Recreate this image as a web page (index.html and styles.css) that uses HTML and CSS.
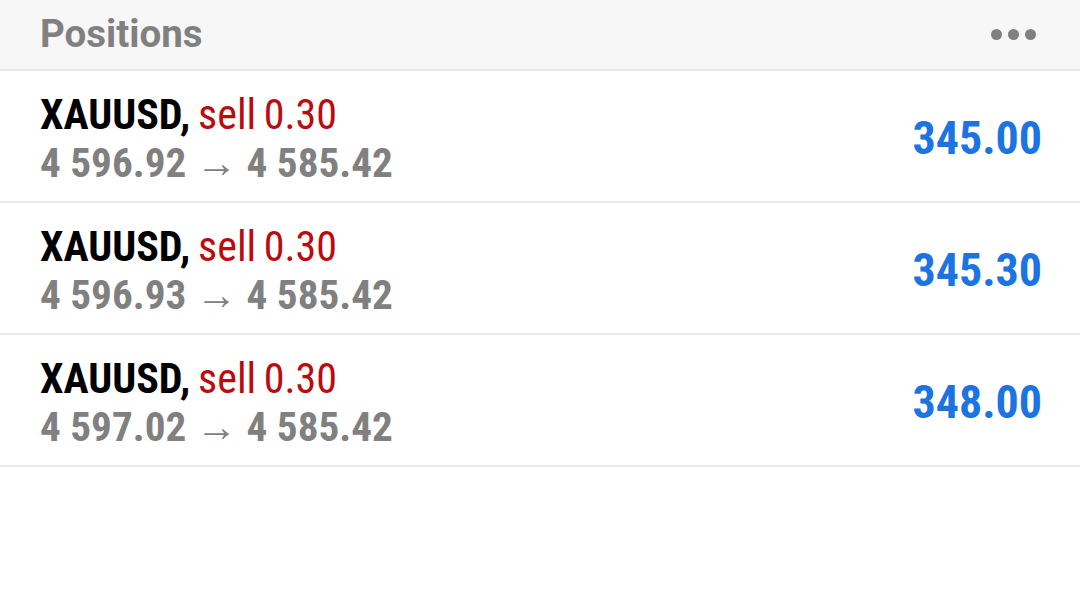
FILE: index.html
```html
<!DOCTYPE html>
<html>
<head>
<meta charset="utf-8">
<link rel="stylesheet" href="styles.css">
</head>
<body>
<div class="app">
  <header class="header">
    <h1 class="title">Positions</h1>
    <button class="more" aria-label="More">
      <span class="dot"></span><span class="dot"></span><span class="dot"></span>
    </button>
  </header>
  <ul class="list">
    <li class="row">
      <div class="info">
        <div class="line1"><span class="symbol">XAUUSD,</span> <span class="side">sell 0.30</span></div>
        <div class="line2">4 596.92 → 4 585.42</div>
      </div>
      <div class="profit">345.00</div>
    </li>
    <li class="row">
      <div class="info">
        <div class="line1"><span class="symbol">XAUUSD,</span> <span class="side">sell 0.30</span></div>
        <div class="line2">4 596.93 → 4 585.42</div>
      </div>
      <div class="profit">345.30</div>
    </li>
    <li class="row">
      <div class="info">
        <div class="line1"><span class="symbol">XAUUSD,</span> <span class="side">sell 0.30</span></div>
        <div class="line2">4 597.02 → 4 585.42</div>
      </div>
      <div class="profit">348.00</div>
    </li>
  </ul>
</div>
</body>
</html>
```
FILE: styles.css
```css
html, body {
  margin: 0;
  padding: 0;
  background: #ffffff;
}
.app {
  width: 1080px;
  height: 608px;
  background: #ffffff;
  font-family: "Roboto Condensed", Roboto, "Liberation Sans", sans-serif;
}
.header {
  height: 69px;
  background: #f7f7f7;
  border-bottom: 2px solid #e6e6e6;
  display: flex;
  align-items: center;
  justify-content: space-between;
  padding: 0 44px 0 40px;
}
.title {
  margin: 0;
  font-family: Roboto, "Liberation Sans", sans-serif;
  font-weight: 700;
  font-size: 38.5px;
  color: #808080;
  line-height: 1;
}
.more {
  display: flex;
  gap: 6px;
  padding: 0;
  border: 0;
  background: transparent;
}
.dot {
  width: 11px;
  height: 11px;
  border-radius: 50%;
  background: #808080;
}
.list {
  list-style: none;
  margin: 0;
  padding: 0;
}
.row {
  height: 130px;
  border-bottom: 2px solid #e8e8e8;
  display: flex;
  align-items: center;
  justify-content: space-between;
  padding: 0 38px 0 40px;
  box-sizing: content-box;
}
.info {
  display: flex;
  flex-direction: column;
  padding-top: 6px;
}
.line1, .line2 {
  font-size: 42px;
  line-height: 49px;
  font-weight: 700;
  white-space: nowrap;
}
.line1 {
  word-spacing: -2px;
}
.symbol {
  color: #000000;
}
.side {
  color: #bc0a0e;
  font-weight: 400;
}
.line2 {
  font-size: 41.2px;
  color: #808080;
}
.profit {
  font-size: 46px;
  font-weight: 700;
  color: #1b74e2;
  line-height: 1;
  padding-top: 4px;
}
```
